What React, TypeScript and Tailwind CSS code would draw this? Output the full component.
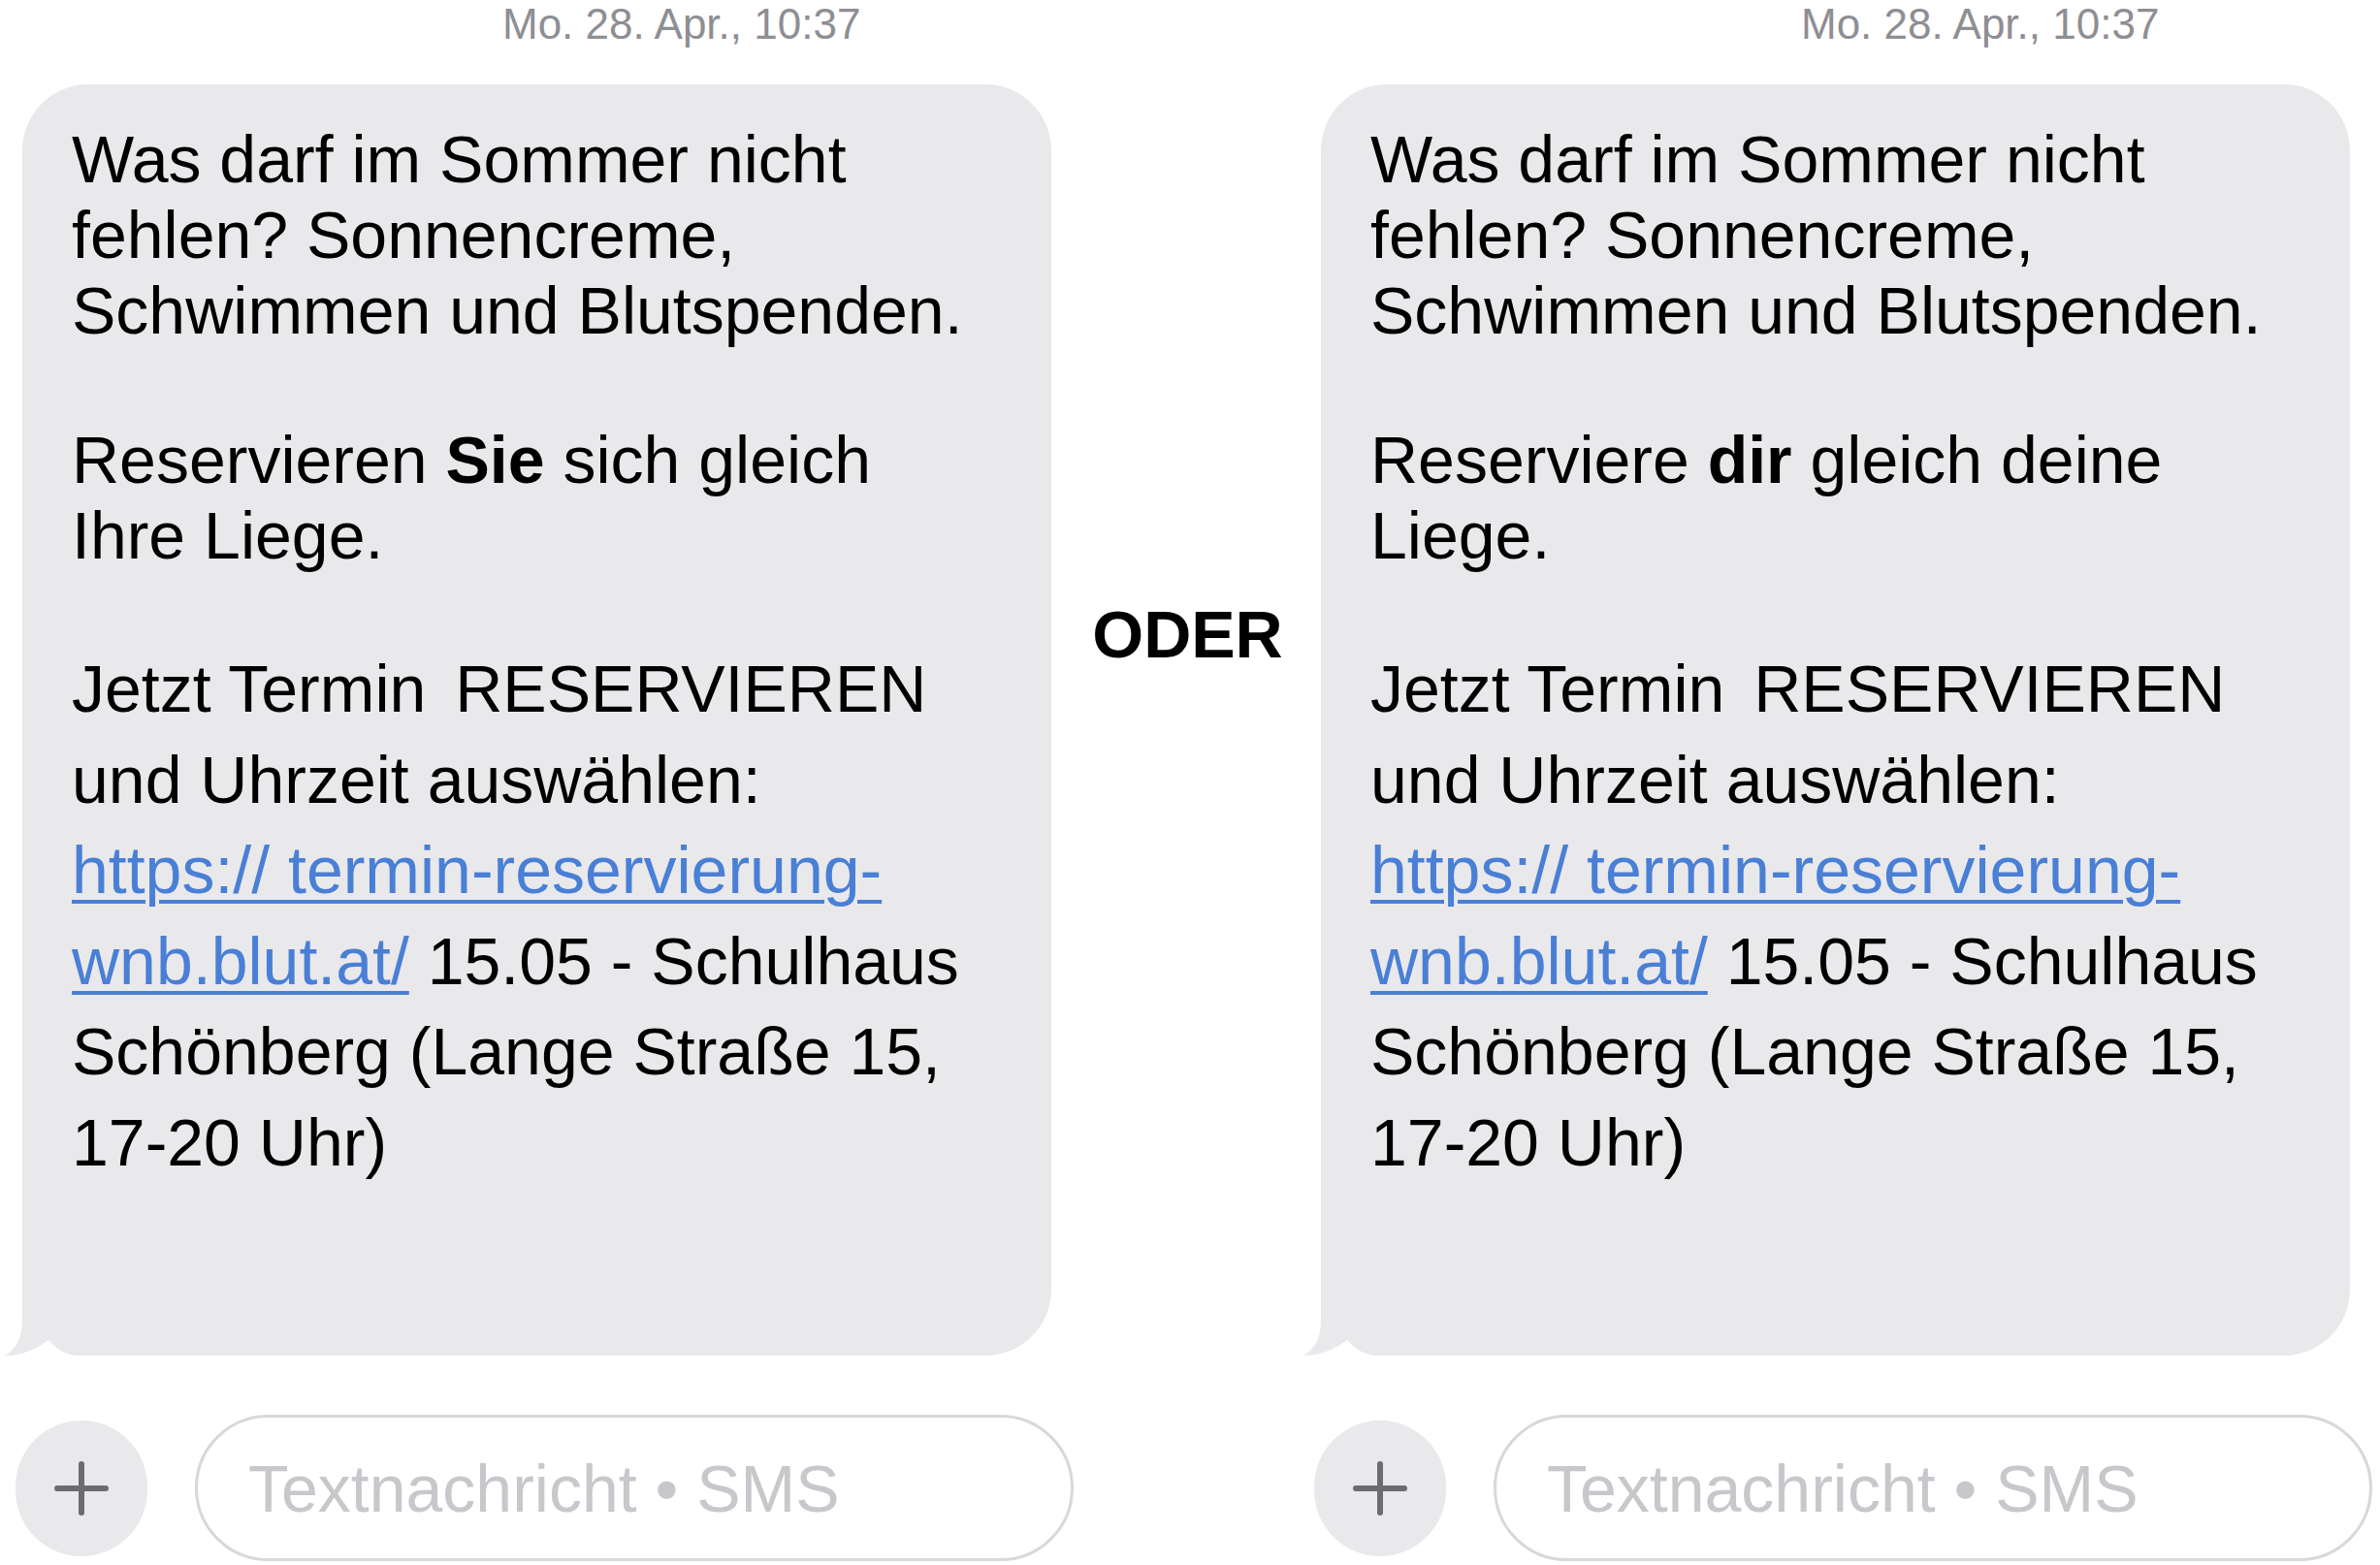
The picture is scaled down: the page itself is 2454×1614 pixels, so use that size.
import React from "react";

function Tail() {
  return (
    <svg
      className="absolute left-[-18px] bottom-0"
      width="90"
      height="50"
      viewBox="0 0 90 50"
    >
      <rect x="18" y="0" width="72" height="50" fill="#ffffff" />
      <path
        d="M18,0 L90,0 L90,50 L75,50 C63,49 54,44 45,34 C34,42 20,50 0,50 C12,43 18,32 18,12 Z"
        fill="#e9e9eb"
      />
    </svg>
  );
}

function PlusIcon() {
  return (
    <svg width="56" height="56" viewBox="0 0 56 56">
      <path d="M28 3 V53 M3 28 H53" stroke="#6c6c70" strokeWidth="6" strokeLinecap="round" />
    </svg>
  );
}

function Panel({ variant, width }: { variant: "sie" | "du"; width: string }) {
  return (
    <div className={`flex flex-col shrink-0 ${width}`}>
      <div className="ml-[518px] text-[44px] leading-[50px] text-[#8e8e93] whitespace-nowrap">
        Mo. 28. Apr., 10:37
      </div>
      <div className="relative mt-[37px] ml-[23px] w-[1061px] h-[1311px] bg-[#e9e9eb] rounded-[68px] rounded-bl-none pl-[51px] pt-[38px] text-black text-[68px] whitespace-nowrap">
        <p className="leading-[78px]">
          Was darf im Sommer nicht
          <br />
          fehlen? Sonnencreme,
          <br />
          Schwimmen und Blutspenden.
        </p>
        <p className="leading-[78px] mt-[76px]">
          {variant === "sie" ? (
            <>
              Reservieren <span className="font-bold">Sie</span> sich gleich
              <br />
              Ihre Liege.
            </>
          ) : (
            <>
              Reserviere <span className="font-bold">dir</span> gleich deine
              <br />
              Liege.
            </>
          )}
        </p>
        <p className="leading-[93.5px] mt-[73px]">
          Jetzt Termin <span className="ml-[11px]">RESERVIEREN</span>
          <br />
          und Uhrzeit auswählen:
          <br />
          <span className="text-[#4a7fd6] underline decoration-[4px] underline-offset-[7px]">
            https:// termin-reservierung-
            <br />
            wnb.blut.at/
          </span>{" "}
          15.05 - Schulhaus
          <br />
          Schönberg (Lange Straße 15,
          <br />
          17-20 Uhr)
        </p>
        <Tail />
      </div>
      <div className="mt-[61px] flex items-center">
        <div className="ml-[16px] w-[136px] h-[140px] rounded-full bg-[#e9e9eb] flex items-center justify-center shrink-0">
          <PlusIcon />
        </div>
        <div className="ml-[49px] w-[906px] h-[151px] rounded-full border-[3px] border-[#d8d8dc] flex items-center pl-[52px] shrink-0">
          <span className="text-[68px] text-[#c7c7cc] whitespace-nowrap">
            Textnachricht • SMS
          </span>
        </div>
      </div>
    </div>
  );
}

export default function App() {
  return (
    <div
      className="w-[2454px] h-[1614px] bg-white overflow-hidden flex"
      style={{ fontFamily: '"Liberation Sans", Arial, Helvetica, sans-serif' }}
    >
      <Panel variant="sie" width="w-[1110px]" />
      <div className="w-[229px] shrink-0 flex justify-center pt-[620px]">
        <span className="text-[68px] leading-[68px] font-bold text-black">ODER</span>
      </div>
      <Panel variant="du" width="w-[1115px]" />
    </div>
  );
}
